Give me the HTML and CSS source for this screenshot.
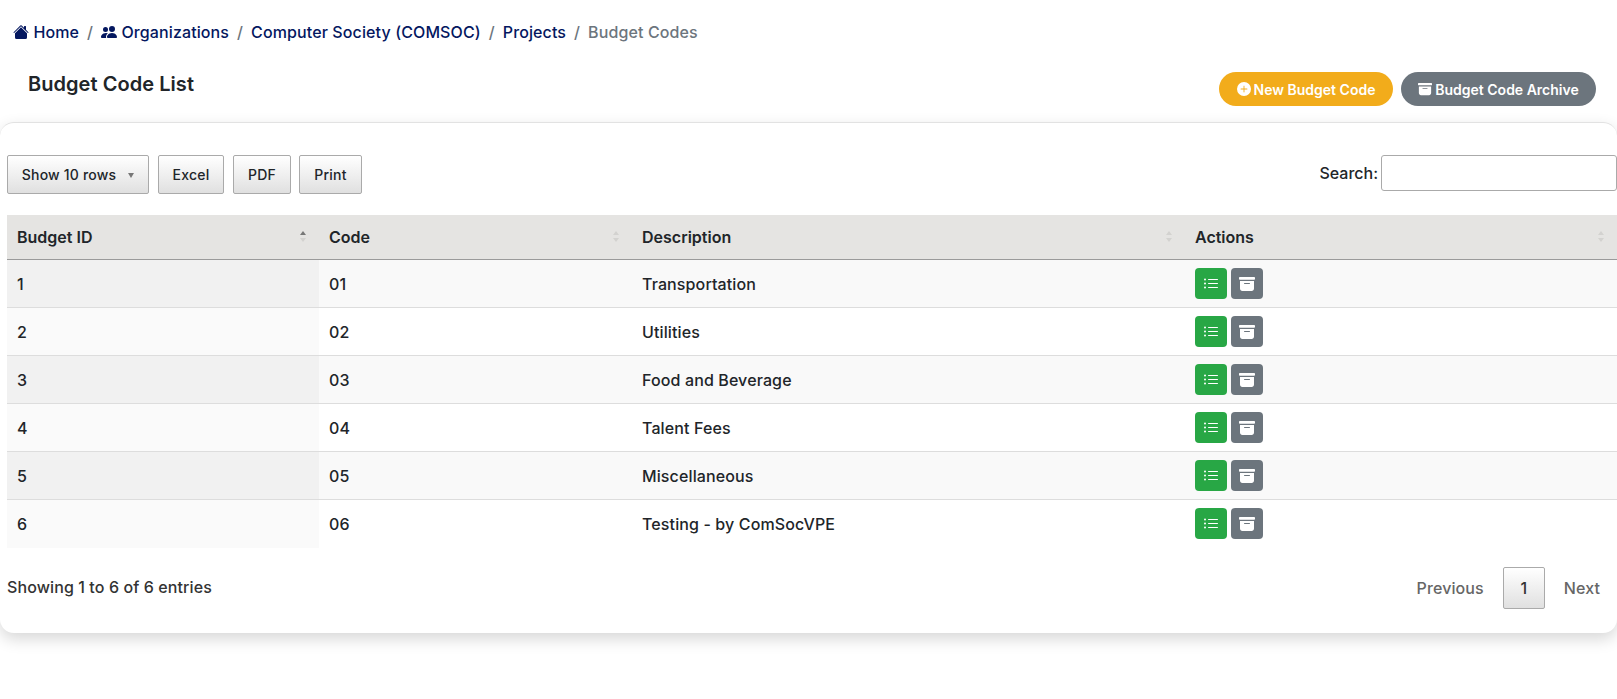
FILE: index.html
```html
<!DOCTYPE html>
<html lang="en">
<head>
  <meta charset="UTF-8" />
  <meta name="viewport" content="width=device-width, initial-scale=1.0"/>
  <title>Budget Codes</title>
  <link rel="stylesheet" href="styles.css">
</head>
<body>
  <nav class="crumbs">
    <a href="#"><svg class="ico-crumb" viewBox="0 0 16 16"><path d="M8.707 1.5a1 1 0 0 0-1.414 0L.646 8.146a.5.5 0 0 0 .708.708L8 2.207l6.646 6.647a.5.5 0 0 0 .708-.708L13 5.793V2.5a.5.5 0 0 0-.5-.5h-1a.5.5 0 0 0-.5.5v1.293L8.707 1.5Z"/><path d="m8 3.293 6 6V13.5a1.5 1.5 0 0 1-1.5 1.5h-9A1.5 1.5 0 0 1 2 13.5V9.293l6-6Z"/></svg> Home</a>
    <span class="sep">/</span>
    <a href="#"><svg class="ico-crumb" viewBox="0 0 16 16"><path d="M7 14s-1 0-1-1 1-4 5-4 5 3 5 4-1 1-1 1H7Zm4-6a3 3 0 1 0 0-6 3 3 0 0 0 0 6Zm-5.784 6A2.238 2.238 0 0 1 5 13c0-1.355.68-2.75 1.936-3.72A6.325 6.325 0 0 0 5 9c-4 0-5 3-5 4s1 1 1 1h4.216ZM4.5 8a2.5 2.5 0 1 0 0-5 2.5 2.5 0 0 0 0 5Z"/></svg> Organizations</a>
    <span class="sep">/</span>
    <a href="#">Computer Society (COMSOC)</a>
    <span class="sep">/</span>
    <a href="#">Projects</a>
    <span class="sep">/</span>
    <span class="current">Budget Codes</span>
  </nav>

  <div class="page-head">
    <h1>Budget Code List</h1>
    <div class="head-btns">
      <a class="pill pill-new" href="#"><svg class="ico" viewBox="0 0 16 16"><path d="M16 8A8 8 0 1 1 0 8a8 8 0 0 1 16 0zM8.5 4.5a.5.5 0 0 0-1 0v3h-3a.5.5 0 0 0 0 1h3v3a.5.5 0 0 0 1 0v-3h3a.5.5 0 0 0 0-1h-3v-3z"/></svg> New Budget Code</a>
      <a class="pill pill-archive" href="#"><svg class="ico" viewBox="0 0 16 16"><path d="M12.643 15C13.979 15 15 13.845 15 12.5V5H1v7.5C1 13.845 2.021 15 3.357 15h9.286zM5.5 7h5a.5.5 0 0 1 0 1h-5a.5.5 0 0 1 0-1zM.8 1a.8.8 0 0 0-.8.8V3a.8.8 0 0 0 .8.8h14.4A.8.8 0 0 0 16 3V1.8a.8.8 0 0 0-.8-.8H.8z"/></svg> Budget Code Archive</a>
    </div>
  </div>

  <section class="card">
    <div class="toolbar">
      <div class="dt-btns">
        <button class="dt-btn btn-rows">Show 10 rows <span class="caret"></span></button>
        <button class="dt-btn btn-excel">Excel</button>
        <button class="dt-btn btn-pdf">PDF</button>
        <button class="dt-btn btn-print">Print</button>
      </div>
      <label class="search">Search: <input type="search" /></label>
    </div>

    <table class="codes">
      <colgroup>
        <col class="col-id"><col class="col-code"><col class="col-desc"><col class="col-act">
      </colgroup>
      <thead>
        <tr>
          <th>Budget ID<span class="sort sort-asc"></span></th>
          <th>Code<span class="sort"></span></th>
          <th>Description<span class="sort"></span></th>
          <th>Actions<span class="sort"></span></th>
        </tr>
      </thead>
      <tbody id="rows"></tbody>
    </table>

    <div class="table-foot">
      <div class="info">Showing 1 to 6 of 6 entries</div>
      <div class="pager">
        <a href="#">Previous</a>
        <a href="#" class="page-on">1</a>
        <a href="#">Next</a>
      </div>
    </div>
  </section>

  <script>
    const budgetCodes = [
      ["1", "01", "Transportation"],
      ["2", "02", "Utilities"],
      ["3", "03", "Food and Beverage"],
      ["4", "04", "Talent Fees"],
      ["5", "05", "Miscellaneous"],
      ["6", "06", "Testing - by ComSocVPE"]
    ];
    const listIcon = '<svg class="ico-list" viewBox="0 0 16 16"><path d="M5 11.5a.5.5 0 0 1 .5-.5h9a.5.5 0 0 1 0 1h-9a.5.5 0 0 1-.5-.5zm0-4a.5.5 0 0 1 .5-.5h9a.5.5 0 0 1 0 1h-9a.5.5 0 0 1-.5-.5zm0-4a.5.5 0 0 1 .5-.5h9a.5.5 0 0 1 0 1h-9a.5.5 0 0 1-.5-.5zm-3 1a1 1 0 1 0 0-2 1 1 0 0 0 0 2zm0 4a1 1 0 1 0 0-2 1 1 0 0 0 0 2zm0 4a1 1 0 1 0 0-2 1 1 0 0 0 0 2z"/></svg>';
    const archiveIcon = document.querySelector('.pill-archive svg').outerHTML;

    document.getElementById('rows').innerHTML = budgetCodes.map(r => `
      <tr>
        <td>${r[0]}</td>
        <td>${r[1]}</td>
        <td>${r[2]}</td>
        <td><a class="act act-list" href="#">${listIcon}</a><a class="act act-archive" href="#">${archiveIcon}</a></td>
      </tr>`).join('');
  </script>
</body>
</html>
```

FILE: styles.css
```css
html, body {
  margin: 0;
  overflow: hidden;
}
body {
  font-family: Inter, 'Liberation Sans', sans-serif;
  font-size: 16px;
  font-weight: 500;
  color: #212529;
  background: #fff;
  height: 699px;
}
a {
  text-decoration: none;
}

/* breadcrumb */
.crumbs {
  display: flex;
  align-items: center;
  height: 22px;
  padding: 21px 0 0 13px;
  line-height: 22px;
  letter-spacing: 0.11px;
  margin-bottom: 1px;
}
.crumbs a {
  color: #04175f;
}
.ico-crumb {
  width: 16px;
  height: 16px;
  fill: #04175f;
  vertical-align: -2px;
}
.sep {
  color: #6c757d;
  padding: 0 8px;
}
.current {
  color: #6c757d;
}

/* title row */
.page-head {
  display: flex;
  justify-content: space-between;
  height: 78px;
  padding-right: 21px;
}
h1 {
  margin: 28px 0 0 28px;
  font-size: 20px;
  font-weight: 600;
  line-height: 24px;
  letter-spacing: 0.05px;
}
.head-btns {
  display: flex;
  gap: 8px;
  margin-top: 28px;
}
.pill {
  display: flex;
  align-items: center;
  justify-content: center;
  gap: 3px;
  height: 34px;
  border-radius: 17px;
  color: #fff;
  font-size: 14px;
  font-weight: 600;
}
.pill-new {
  width: 174px;
  background: #f2ac1b;
}
.pill-archive {
  width: 195px;
  background: #6c757d;
}
.ico {
  width: 14px;
  height: 14px;
  fill: #fff;
}

/* card */
.card {
  box-sizing: border-box;
  height: 511px;
  padding: 32px 0 0 7px;
  border: 1px solid #e2e2e2;
  border-width: 1px 0 0;
  border-radius: 14px;
  box-shadow: 0 6px 16px rgba(0, 0, 0, 0.16);
}
.toolbar {
  display: flex;
  justify-content: space-between;
  height: 60px;
}
.dt-btns {
  display: flex;
  gap: 9px;
}
.dt-btn {
  box-sizing: border-box;
  height: 39px;
  padding: 0;
  border: 1px solid #aaa;
  border-radius: 2px;
  background: linear-gradient(to bottom, #fff 0%, #e0e0e0 100%);
  font-family: inherit;
  font-size: 14px;
  font-weight: 500;
  letter-spacing: 0.2px;
  color: #212529;
}
.btn-rows {
  width: 142px;
}
.btn-excel {
  width: 66px;
}
.btn-pdf {
  width: 58px;
  margin-right: -1px;
}
.btn-print {
  width: 63px;
}
.caret {
  display: inline-block;
  margin-left: 8px;
  vertical-align: 2px;
  border: 3.5px solid transparent;
  border-top: 5px solid #777;
  border-bottom: 0;
}
.search {
  display: flex;
  align-items: flex-start;
  gap: 3px;
  line-height: 36px;
}
.search input {
  box-sizing: border-box;
  width: 236px;
  height: 36px;
  border: 1px solid #aaa;
  border-radius: 3px;
  background: #fff;
}

/* table */
.codes {
  table-layout: fixed;
  width: 1610px;
  border-collapse: collapse;
}
.col-id {
  width: 312px;
}
.col-code {
  width: 313px;
}
.col-desc {
  width: 553px;
}
.codes th {
  position: relative;
  height: 44px;
  padding: 0 10px;
  background: #e5e4e2;
  border-bottom: 1px solid #9a9a9a;
  text-align: left;
  font-weight: 600;
}
.codes td {
  box-sizing: border-box;
  height: 48px;
  padding: 1px 10px 0;
  border-top: 1px solid #ddd;
  font-weight: 500;
  letter-spacing: 0.12px;
}
.codes tbody tr:first-child td {
  border-top: 0;
}
.codes tbody tr:nth-child(odd) td {
  background: #f9f9f9;
}
.codes tbody tr:nth-child(odd) td:first-child {
  background: #f1f1f1;
}
.codes tbody tr:nth-child(even) td:first-child {
  background: #fafafa;
}
.codes td:last-child {
  padding-top: 0;
}
.sort {
  position: absolute;
  right: 13px;
  top: 16px;
  width: 6px;
  height: 12px;
}
.sort::before,
.sort::after {
  content: "";
  position: absolute;
  left: 0;
  border: 3px solid transparent;
}
.sort::before {
  top: 0;
  border-top: 0;
  border-bottom: 4px solid #d3d2d0;
}
.sort::after {
  bottom: 1px;
  border-bottom: 0;
  border-top: 4px solid #d3d2d0;
}
.sort-asc::before {
  border-bottom-color: #777;
}
.act {
  display: inline-flex;
  align-items: center;
  justify-content: center;
  width: 32px;
  height: 31px;
  margin-right: 4px;
  border-radius: 4px;
  vertical-align: middle;
}
.act-list {
  background: #28a745;
}
.act-archive {
  background: #6c757d;
}
.act .ico {
  width: 16px;
  height: 16px;
}
.ico-list {
  width: 16px;
  height: 16px;
  fill: #fff;
}

/* under the table */
.table-foot {
  display: flex;
  justify-content: space-between;
  padding: 19px 17px 0 0;
}
.info {
  line-height: 40px;
  letter-spacing: 0.1px;
  color: #333;
}
.pager {
  display: flex;
  align-items: center;
  gap: 19px;
  font-weight: 500;
  letter-spacing: 0.1px;
}
.pager a {
  color: #666;
}
.pager .page-on {
  box-sizing: border-box;
  width: 42px;
  height: 42px;
  line-height: 40px;
  text-align: center;
  border: 1px solid #aaa;
  border-radius: 2px;
  background: linear-gradient(to bottom, #fff 0%, #e0e0e0 100%);
  color: #333;
}
```
